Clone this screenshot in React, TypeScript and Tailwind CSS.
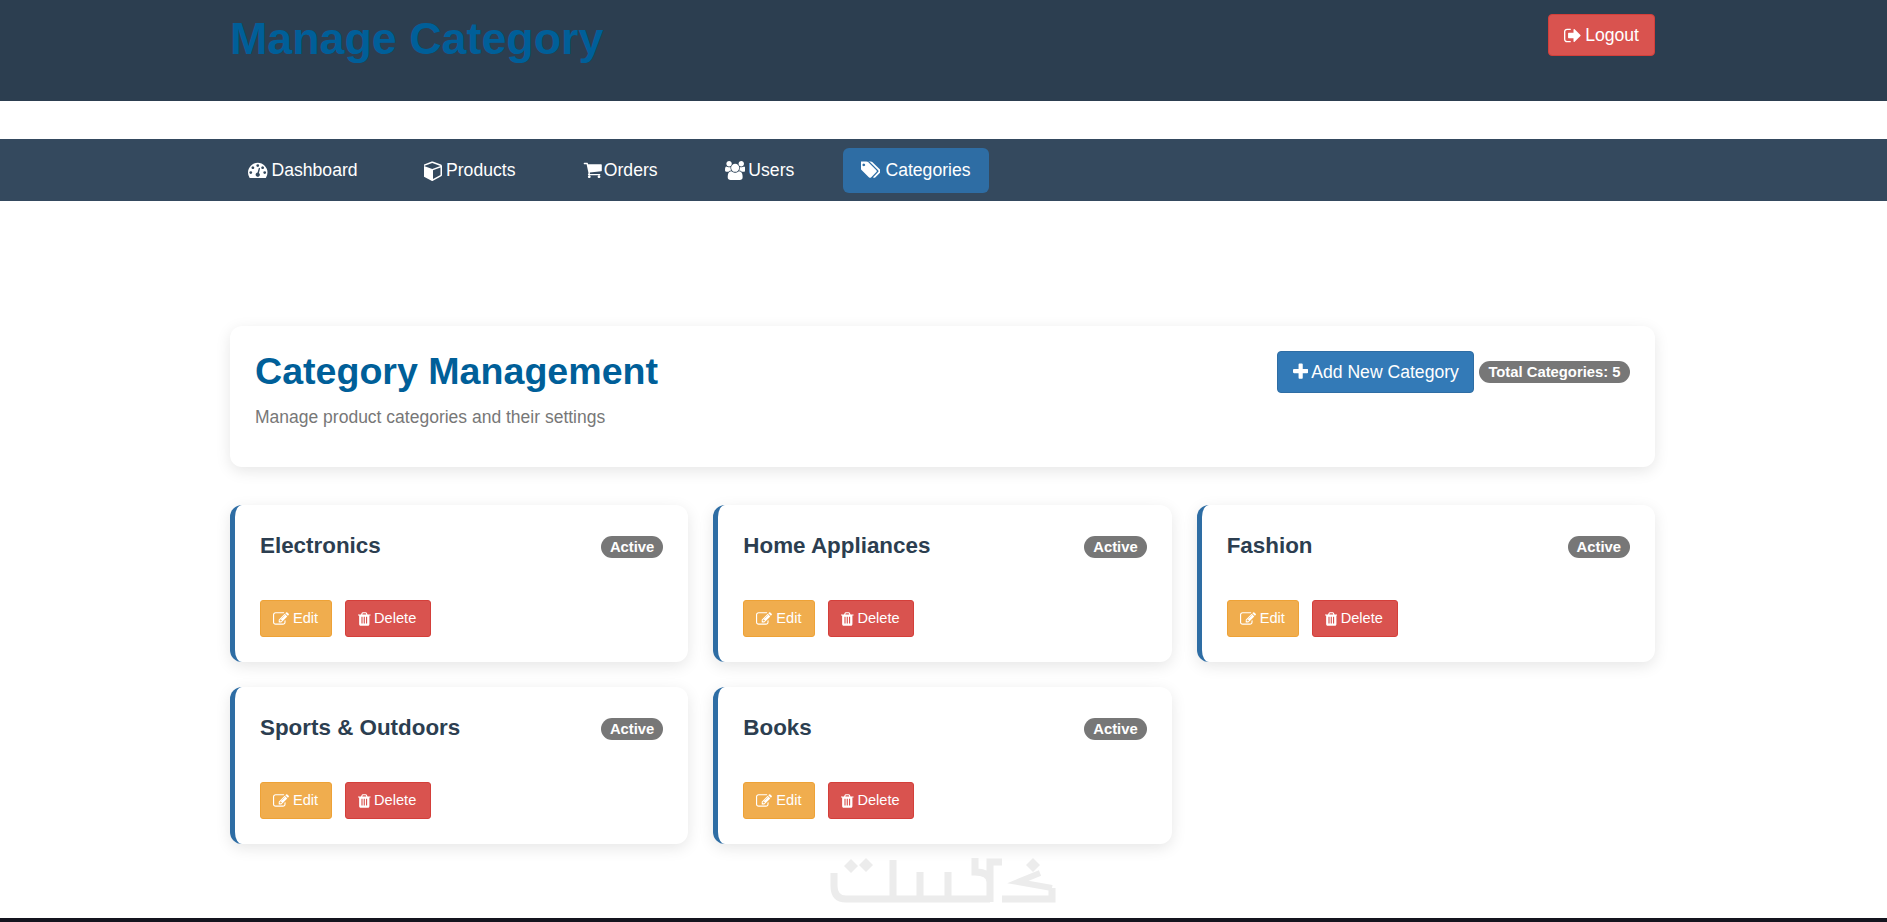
import React from 'react';

// Font Awesome 4 glyphs: [viewBox x, viewBox width, path]
type Glyph = [number, number, string];

const dashboardGlyph: Glyph = [0, 1792, 'M384 1152q0-53-37.5-90.5t-90.5-37.5-90.5 37.5-37.5 90.5 37.5 90.5 90.5 37.5 90.5-37.5 37.5-90.5zm192-448q0-53-37.5-90.5t-90.5-37.5-90.5 37.5-37.5 90.5 37.5 90.5 90.5 37.5 90.5-37.5 37.5-90.5zm428 481l101-382q6-26-7.5-48.5t-38.5-29.5-48 6.5-30 39.5l-101 382q-60 5-107 43.5t-63 98.5q-20 77 20 146t117 89 146-20 89-117q16-60-6-117t-72-91zm660-33q0-53-37.5-90.5t-90.5-37.5-90.5 37.5-37.5 90.5 37.5 90.5 90.5 37.5 90.5-37.5 37.5-90.5zm-640-640q0-53-37.5-90.5t-90.5-37.5-90.5 37.5-37.5 90.5 37.5 90.5 90.5 37.5 90.5-37.5 37.5-90.5zm448 192q0-53-37.5-90.5t-90.5-37.5-90.5 37.5-37.5 90.5 37.5 90.5 90.5 37.5 90.5-37.5 37.5-90.5zm320 448q0 261-141 483-19 29-54 29h-1402q-35 0-54-29-141-221-141-483 0-182 71-348t191-286 286-191 348-71 348 71 286 191 191 286 71 348z'];
const cubeGlyph: Glyph = [128, 1536, 'M896 1629l640-349v-636l-640 233v752zm-64-865l698-254-698-254-698 254zm832-252v768q0 35-18 65t-49 47l-704 384q-28 16-61 16t-61-16l-704-384q-31-17-49-47t-18-65v-768q0-40 23-73t61-47l704-256q22-8 44-8t44 8l704 256q38 14 61 47t23 73z'];
const cartGlyph: Glyph = [0, 1728, 'M704 1536q0 52-38 90t-90 38-90-38-38-90 38-90 90-38 90 38 38 90zm896 0q0 52-38 90t-90 38-90-38-38-90 38-90 90-38 90 38 38 90zm128-1088v512q0 24-16.5 42.5t-40.5 21.5l-1044 122q13 60 13 70 0 16-24 64h920q26 0 45 19t19 45-19 45-45 19h-1024q-26 0-45-19t-19-45q0-11 8-31.5t16-36 21.5-40 15.5-29.5l-177-823h-204q-26 0-45-19t-19-45 19-45 45-19h256q16 0 28.5 6.5t19.5 15.5 13 24.5 8 26 5.5 29.5 4.5 26h1201q26 0 45 19t19 45z'];
const usersGlyph: Glyph = [0, 1920, 'M593 896q-162 5-265 128h-134q-82 0-138-40.5t-56-118.5q0-353 124-353 6 0 43.5 21t97.5 42.5 119 21.5q67 0 133-23-5 37-5 66 0 139 81 256zm1071 637q0 120-73 189.5t-194 69.5h-874q-121 0-194-69.5t-73-189.5q0-53 3.5-103.5t14-109 26.5-108.5 43-97.5 62-81 85.5-53.5 111.5-20q10 0 43 21.5t73 48 107 48 135 21.5 135-21.5 107-48 73-48 43-21.5q61 0 111.5 20t85.5 53.5 62 81 43 97.5 26.5 108.5 14 109 3.5 103.5zm-1024-1277q0 106-75 181t-181 75-181-75-75-181 75-181 181-75 181 75 75 181zm704 384q0 159-112.5 271.5t-271.5 112.5-271.5-112.5-112.5-271.5 112.5-271.5 271.5-112.5 271.5 112.5 112.5 271.5zm576 225q0 78-56 118.5t-138 40.5h-134q-103-123-265-128 81-117 81-256 0-29-5-66 66 23 133 23 59 0 119-21.5t97.5-42.5 43.5-21q124 0 124 353zm-128-609q0 106-75 181t-181 75-181-75-75-181 75-181 181-75 181 75 75 181z'];
const tagsGlyph: Glyph = [0, 1835, 'M384 448q0-53-37.5-90.5t-90.5-37.5-90.5 37.5-37.5 90.5 37.5 90.5 90.5 37.5 90.5-37.5 37.5-90.5zm1067 576q0 53-37 90l-491 492q-39 37-91 37-53 0-90-37l-715-716q-38-37-64.5-101t-26.5-117v-416q0-52 38-90t90-38h416q53 0 117 26.5t102 64.5l715 714q37 39 37 91zm384 0q0 53-37 90l-491 492q-39 37-91 37-36 0-59-14t-53-45l470-470q37-37 37-90 0-52-37-91l-715-714q-38-38-102-64.5t-117-26.5h224q53 0 117 26.5t102 64.5l715 714q37 39 37 91z'];
const signOutGlyph: Glyph = [64, 1600, 'M704 1440q0 4 1 20t.5 26.5-3 23.5-10 19.5-20.5 6.5h-320q-119 0-203.5-84.5t-84.5-203.5v-704q0-119 84.5-203.5t203.5-84.5h320q13 0 22.5 9.5t9.5 22.5q0 4 1 20t.5 26.5-3 23.5-10 19.5-20.5 6.5h-320q-66 0-113 47t-47 113v704q0 66 47 113t113 47h288l11.5 1 11.5 3 8 5.5 7 9 2 13.5zm928-544q0 26-19 45l-544 544q-19 19-45 19t-45-19-19-45v-288h-448q-26 0-45-19t-19-45v-384q0-26 19-45t45-19h448v-288q0-26 19-45t45-19 45 19l544 544q19 19 19 45z'];
const plusGlyph: Glyph = [192, 1408, 'M1600 736v192q0 40-28 68t-68 28h-416v416q0 40-28 68t-68 28h-192q-40 0-68-28t-28-68v-416h-416q-40 0-68-28t-28-68v-192q0-40 28-68t68-28h416v-416q0-40 28-68t68-28h192q40 0 68 28t28 68v416h416q40 0 68 28t28 68z'];
const editGlyph: Glyph = [0, 1792, 'M888 1184l116-116-152-152-116 116v56h96v96h56zm440-720q-16-16-33 1l-350 350q-17 17-1 33t33-1l350-350q17-17 1-33zm80 594v190q0 119-84.5 203.5t-203.5 84.5h-832q-119 0-203.5-84.5t-84.5-203.5v-832q0-119 84.5-203.5t203.5-84.5h832q63 0 117 25 15 7 18 23 3 17-9 29l-49 49q-14 14-32 8-23-6-45-6h-832q-66 0-113 47t-47 113v832q0 66 47 113t113 47h832q66 0 113-47t47-113v-126q0-13 9-22l64-64q15-15 35-7t20 29zm-96-738l288 288-672 672h-288v-288zm444 132l-92 92-288-288 92-92q28-28 68-28t68 28l152 152q28 28 28 68t-28 68z'];
const trashGlyph: Glyph = [192, 1408, 'M704 1376v-704q0-14-9-23t-23-9h-64q-14 0-23 9t-9 23v704q0 14 9 23t23 9h64q14 0 23-9t9-23zm256 0v-704q0-14-9-23t-23-9h-64q-14 0-23 9t-9 23v704q0 14 9 23t23 9h64q14 0 23-9t9-23zm256 0v-704q0-14-9-23t-23-9h-64q-14 0-23 9t-9 23v704q0 14 9 23t23 9h64q14 0 23-9t9-23zm-544-992h448l-48-117q-7-9-17-11h-317q-10 2-17 11zm928 32v64q0 14-9 23t-23 9h-96v948q0 83-47 143.5t-113 60.5h-832q-66 0-113-58.5t-47-141.5v-952h-96q-14 0-23-9t-9-23v-64q0-14 9-23t23-9h309l70-167q15-37 54-63t79-26h320q40 0 79 26t54 63l70 167h309q14 0 23 9t9 23z'];

const Icon = ({ glyph, size }: { glyph: Glyph; size: number }) => (
  <svg width={(glyph[1] / 1792) * size} height={size} viewBox={`${glyph[0]} 0 ${glyph[1]} 1792`} fill="currentColor" className="shrink-0">
    <path d={glyph[2]} />
  </svg>
);

// widths follow the reference, the text runs a little differently here
const navItems: { label: string; glyph: Glyph; size: number; box: string }[] = [
  { label: 'Dashboard', glyph: dashboardGlyph, size: 19.5, box: 'w-[146px] gap-[4px]' },
  { label: 'Products', glyph: cubeGlyph, size: 21, box: 'w-[129px] gap-[4px]' },
  { label: 'Orders', glyph: cartGlyph, size: 19.5, box: 'w-[112px] gap-[2px]' },
  { label: 'Users', glyph: usersGlyph, size: 19, box: 'w-[105.5px] gap-[3px]' },
  { label: 'Categories', glyph: tagsGlyph, size: 19.5, box: 'w-[146px] gap-[5px] bg-[#2e6da4]' },
];

const categories = ['Electronics', 'Home Appliances', 'Fashion', 'Sports & Outdoors', 'Books'];

const CategoryCard = ({ name }: { name: string }) => (
  <div className="h-[157px] rounded-xl border-l-[5px] border-[#2e6da4] bg-white px-[25px] pt-[25px] shadow-[0_4px_15px_rgba(0,0,0,0.1)]">
    <div className="flex items-start justify-between">
      <h3 className="text-[22.4px] font-bold leading-[32px] text-[#2c3e50]">{name}</h3>
      <span className="mt-[6px] rounded-full bg-[#777777] px-[9px] py-[2.5px] text-[14.8px] font-bold leading-[17px] text-white">Active</span>
    </div>
    <div className="mt-[38px] flex gap-[13px]">
      <button className="flex h-[37px] w-[72px] items-center gap-[4px] rounded-[3px] border border-[#eea236] bg-[#f0ad4e] px-[12px] pt-px text-[14.6px] text-white">
        <Icon glyph={editGlyph} size={16} /> Edit
      </button>
      <button className="flex h-[37px] w-[86px] items-center gap-[3.5px] rounded-[3px] border border-[#d43f3a] bg-[#d9534f] px-[12px] pt-px text-[14.6px] text-white">
        <Icon glyph={trashGlyph} size={16} /> Delete
      </button>
    </div>
  </div>
);

// Khamsat mark, faint over the bottom of the page
const WatermarkLogo = () => (
  <svg
    aria-label="Khamsat logo"
    width="228"
    height="46"
    viewBox="0 0 228 46"
    fill="none"
    stroke="#ececec"
    strokeWidth="7"
    className="absolute left-[830px] top-[858px]"
  >
    <path d="M4 15V28Q4 41 16 41H160" />
    <path d="M63 2V41M90 14V41M118 14V41" />
    <path d="M160 44V4H172M145 0V14Q160 14 160 24" />
    <path d="M172 41H222V30" />
    <path d="M210 15L188 24L222 30" strokeWidth="6" />
    <path d="M21 1l7 7-7 7-7-7zM36 0l7 7-7 7-7-7zM203 0l7 7-7 7-7-7z" fill="#ececec" stroke="none" />
  </svg>
);

export default function App() {
  return (
    <div className="relative flex h-[922px] flex-col overflow-hidden bg-white font-['Liberation_Sans',Arial,sans-serif]">
      <header className="h-[101px] shrink-0 bg-[#2c3e50]">
        <div className="ml-[230px] flex w-[1425px] items-start justify-between">
          <h1 className="mt-[14px] text-[44.8px] font-bold leading-[48px] text-[#005f99]">Manage Category</h1>
          <button className="mt-[14px] flex h-[42px] items-center gap-[4px] rounded border border-[#d43f3a] bg-[#d9534f] px-[15px] text-[17.6px] text-white">
            <Icon glyph={signOutGlyph} size={19} /> Logout
          </button>
        </div>
      </header>

      <nav className="mt-[38px] h-[62px] shrink-0 bg-[#34495e]">
        <div className="ml-[230px] flex h-full w-[1425px] items-center gap-[30px]">
          {navItems.map(({ label, glyph, size, box }) => (
            <a key={label} className={`flex h-[45px] items-center rounded-md px-[18px] text-[17.6px] text-white ${box}`}>
              <Icon glyph={glyph} size={size} /> {label}
            </a>
          ))}
        </div>
      </nav>

      <main className="ml-[230px] mt-[125px] w-[1425px]">
        <section className="flex h-[141px] items-start justify-between rounded-xl bg-white px-[25px] pt-[25px] shadow-[0_4px_15px_rgba(0,0,0,0.1)]">
          <div>
            <h2 className="text-[37.6px] font-bold leading-[40px] text-[#005f99]">Category Management</h2>
            <p className="mt-[14px] text-[17.5px] leading-[25px] text-[#777777]">Manage product categories and their settings</p>
          </div>
          <div className="flex items-center gap-[5px]">
            <button className="flex h-[42px] w-[197px] items-center gap-[3px] whitespace-nowrap rounded border border-[#2e6da4] bg-[#337ab7] px-[15px] text-[17.6px] text-white">
              <Icon glyph={plusGlyph} size={19.5} /> Add New Category
            </button>
            <span className="rounded-full bg-[#777777] px-[9.5px] py-[2.5px] text-[14.8px] font-bold leading-[17px] text-white">Total Categories: 5</span>
          </div>
        </section>

        <div className="mt-[38px] grid grid-cols-3 gap-x-[25px] gap-y-[25px]">
          {categories.map((name) => (
            <CategoryCard key={name} name={name} />
          ))}
        </div>
      </main>

      <WatermarkLogo />
      <footer className="mt-auto h-[4px] shrink-0 bg-[#14141e]" />
    </div>
  );
}
